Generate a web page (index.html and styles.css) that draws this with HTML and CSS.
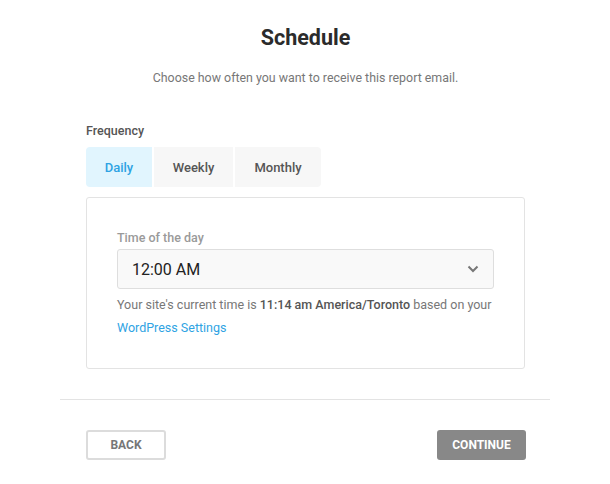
FILE: index.html
```html
<!DOCTYPE html>
<html>
<head>
<meta charset="utf-8">
<link rel="stylesheet" href="styles.css">
</head>
<body>
<div class="wizard">
  <div class="content">
    <h1 class="title">Schedule</h1>
    <p class="subtitle">Choose how often you want to receive this report email.</p>
    <div class="field-label">Frequency</div>
    <div class="tabs">
      <div class="tab active">Daily</div>
      <div class="tab">Weekly</div>
      <div class="tab">Monthly</div>
    </div>
    <div class="card">
      <div class="card-label">Time of the day</div>
      <div class="select">
        <span>12:00 AM</span>
        <svg class="chev" width="12" height="8" viewBox="0 0 12 8"><path d="M1.5 1.5 L6 6 L10.5 1.5" fill="none" stroke="#777" stroke-width="2"/></svg>
      </div>
      <p class="help">Your site's current time is <b>11:14 am America/Toronto</b> based on your <a class="link">WordPress Settings</a></p>
    </div>
  </div>
  <div class="footer">
    <button class="btn back">BACK</button>
    <button class="btn continue">CONTINUE</button>
  </div>
</div>
</body>
</html>
```
FILE: styles.css
```css
* { box-sizing: border-box; }
body {
  margin: 0;
  background: #fff;
  font-family: Roboto, "Liberation Sans", sans-serif;
  color: #444;
}
.wizard {
  width: 490px;
  margin: 0 0 0 60px;
}
.content {
  padding: 24px 25px 30px 26px;
}
.title {
  margin: 0;
  text-align: center;
  font-size: 21.5px;
  font-weight: 700;
  color: #2b2b2b;
  line-height: 28px;
}
.subtitle {
  margin: 17px 0 0;
  text-align: center;
  font-size: 12.4px;
  color: #777;
  line-height: 18px;
}
.field-label {
  margin-top: 36px;
  font-size: 12.5px;
  color: #555;
  font-weight: 500;
  line-height: 16px;
}
.tabs {
  display: flex;
  gap: 2px;
  margin-top: 8px;
}
.tab {
  height: 40px;
  display: flex;
  align-items: center;
  justify-content: center;
  font-size: 13px;
  font-weight: 500;
  color: #555;
  background: #f7f7f7;
}
.tab:nth-child(1) { width: 66px; border-radius: 4px 0 0 4px; }
.tab:nth-child(2) { width: 79px; }
.tab:nth-child(3) { width: 86px; border-radius: 0 4px 4px 0; }
.tab.active {
  background: #e1f5fe;
  color: #2ea3e3;
}
.card {
  margin-top: 10px;
  border: 1px solid #e3e3e3;
  border-radius: 3px;
  padding: 32px 30px 30px 30px;
  height: 172px;
}
.card-label {
  font-size: 12.5px;
  font-weight: 500;
  color: #9a9a9a;
  line-height: 16px;
}
.select {
  margin-top: 3px;
  height: 40px;
  background: #f9f9f9;
  border: 1px solid #dedede;
  border-radius: 3px;
  display: flex;
  align-items: center;
  justify-content: space-between;
  padding: 0 14px 0 14px;
  font-size: 16px;
  color: #222;
}
.chev { display: block; }
.help {
  margin: 4px 0 0;
  font-size: 12.5px;
  color: #777;
  line-height: 23px;
}
.help b { font-weight: 500; color: #555; }
.link { color: #2ea3e3; text-decoration: none; }
.footer {
  border-top: 1px solid #e3e3e3;
  display: flex;
  justify-content: space-between;
  padding: 30px 24px 0 26px;
}
.btn {
  font-family: Roboto, "Liberation Sans", sans-serif;
  font-size: 12px;
  font-weight: 700;
  height: 30px;
  border-radius: 3px;
  cursor: pointer;
}
.back {
  width: 80px;
  background: #fff;
  border: 2px solid #dcdcdc;
  color: #777;
}
.continue {
  width: 89px;
  background: #888;
  border: 0;
  color: #fff;
}
```
